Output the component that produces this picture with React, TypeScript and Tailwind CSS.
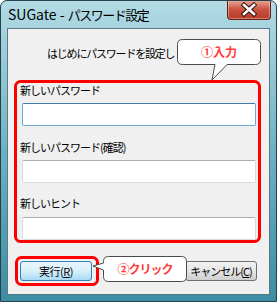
import React from 'react';

function CloseButton() {
  return (
    <div className="mr-[5px] mt-[-1px] h-[20px] w-[44px] rounded-b-[4px] border border-t-0 border-[#5e1f17] bg-gradient-to-b from-[#e9aa9c] via-[#c9513f] to-[#b73a24] shadow-[inset_0_0_0_1px_rgba(255,255,255,0.35)]">
      <svg width="42" height="19" viewBox="0 0 42 19">
        <path d="M16 5 L26 14 M26 5 L16 14" stroke="#3b1410" strokeWidth="4.6" strokeLinecap="square" />
        <path d="M16 5 L26 14 M26 5 L16 14" stroke="#ffffff" strokeWidth="2.6" strokeLinecap="square" />
      </svg>
    </div>
  );
}

function Field({ focused }: { focused?: boolean }) {
  return (
    <div
      className={
        'ml-[14px] h-[23px] w-[234px] rounded-[2px] border bg-white ' +
        (focused ? 'border-[#6fa7d1] border-t-[#3d7bad]' : 'border-[#dadbdf] border-t-[#abadb3]')
      }
    />
  );
}

export default function App() {
  const label = "pl-[12px] text-[11px] leading-[16px] tracking-[-1px] text-black";

  return (
    <div className="relative h-[302px] w-[277px] overflow-hidden rounded-t-[7px] border border-[#27414b] bg-gradient-to-b from-[#b3dbe5] via-[#6cb1c3] to-[#3e8da2] font-['Noto_Sans_CJK_JP','Noto_Sans',sans-serif]">
      {/* title bar */}
      <div className="flex h-[27px] items-start justify-between">
        <span className="whitespace-pre pl-[7px] pt-[4px] text-[14px] leading-[18px] text-black">
          SUGate - <span className="text-[13px] tracking-[-1.5px]">パスワード設定</span>
        </span>
        <CloseButton />
      </div>

      {/* client area */}
      <div className="mx-[6px] flex h-[267px] flex-col border border-[#587985] bg-[#f0f0f0]">
        <p className="mt-[16px] pl-[39px] whitespace-nowrap text-[11px] leading-[16px] tracking-[-1.2px] text-black">
          はじめにパスワードを設定し
        </p>
        <p className={label + ' mt-[21px]'}>新しいパスワード</p>
        <div className="mt-[5px]">
          <Field focused />
        </div>
        <p className={label + ' mt-[13px]'}>新しいパスワード(確認)</p>
        <div className="mt-[5px]">
          <Field />
        </div>
        <p className={label + ' mt-[12px]'}>新しいヒント</p>
        <div className="mt-[6px]">
          <Field />
        </div>
        <div className="mt-[21px] flex justify-between px-[12px]">
          <button className="flex h-[20px] w-[72px] items-center justify-center rounded-[3px] border border-[#3c7fb1] bg-gradient-to-b from-[#eaf6fd] via-[#d9f0fc] to-[#a7d9f5] text-[11px] tracking-[-0.5px] text-black">
            実行(<span className="underline">R</span>)
          </button>
          <button className="flex h-[20px] w-[72px] items-center justify-center rounded-[3px] border border-[#707070] bg-gradient-to-b from-[#f2f2f2] via-[#e5e5e5] to-[#cfcfcf] text-[11px] tracking-[-1px] text-black">
            キャンセル(<span className="underline">C</span>)
          </button>
        </div>
      </div>

      {/* annotations */}
      <svg className="pointer-events-none absolute -left-px -top-px" width="277" height="302" viewBox="0 0 277 302">
        <rect x="15.5" y="81.5" width="244" height="160" rx="5" fill="none" stroke="#ff0000" strokeWidth="3" />
        <rect x="16.5" y="257.5" width="81" height="27" rx="5" fill="none" stroke="#ff0000" strokeWidth="3" />
        <path
          d="M182.5,39.5 H255.5 Q260.5,39.5 260.5,44.5 V59.5 Q260.5,64.5 255.5,64.5 H227 L212,80 L215,64.5 H182.5 Q177.5,64.5 177.5,59.5 V44.5 Q177.5,39.5 182.5,39.5 Z"
          fill="#ffffff"
          stroke="#4a4a4a"
          strokeWidth="1"
        />
        <path
          d="M108.5,256.5 H181.5 Q186.5,256.5 186.5,261.5 V276.5 Q186.5,281.5 181.5,281.5 H108.5 Q103.5,281.5 103.5,276.5 V270 L93,266 L103.5,263 V261.5 Q103.5,256.5 108.5,256.5 Z"
          fill="#ffffff"
          stroke="#4a4a4a"
          strokeWidth="1"
        />
      </svg>
      <div className="absolute left-[176px] top-[38px] flex h-[26px] w-[84px] items-center justify-center text-[12px] font-bold text-[#ff3b3b]">
        ①入力
      </div>
      <div className="absolute left-[102px] top-[255px] flex h-[26px] w-[84px] items-center justify-center text-[12px] font-bold tracking-[-1px] text-[#ff3b3b]">
        ②クリック
      </div>
    </div>
  );
}
